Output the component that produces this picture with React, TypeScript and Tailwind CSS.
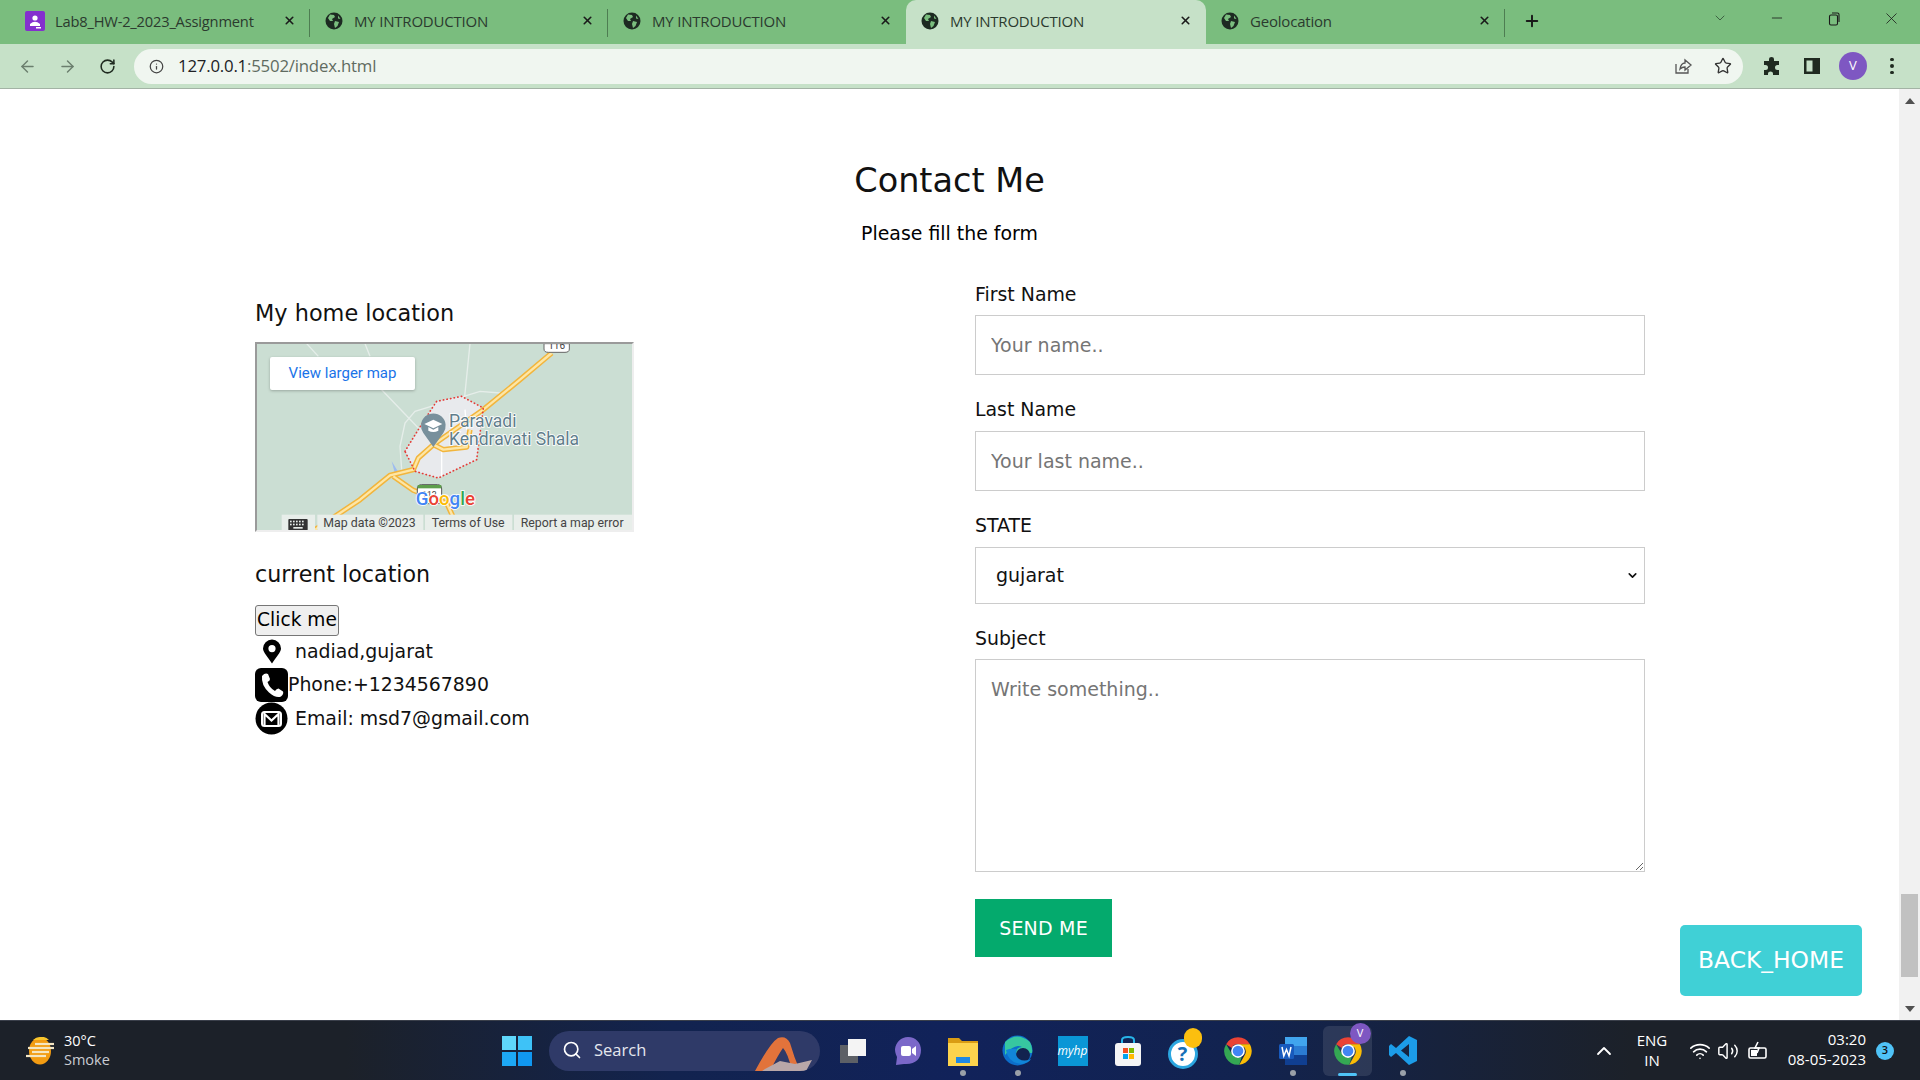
import React from "react";
import { ArrowLeft, ArrowRight, RotateCw, Info, Star, Plus, X, ChevronDown, ChevronUp, Minus, Search, Volume2, Wifi } from "lucide-react";

const dv = "font-['DejaVu_Sans',sans-serif]";
const ui = "font-['Open_Sans',sans-serif]";

function Globe() {
  return (
    <svg width="18" height="18" viewBox="0 0 18 18" className="shrink-0">
      <circle cx="9" cy="9" r="8.5" fill="#1d2a22" />
      <path d="M5 2.5 L9 3 L10 5 L7 7 L8 9 L5 9 L3 6 Z" fill="#7abd7e" />
      <path d="M10 9 L14 10 L12.5 14 L10 16 L9 12 Z" fill="#7abd7e" />
      <path d="M13 3.5 L15.5 7 L13 6.5 Z" fill="#7abd7e" />
    </svg>
  );
}

function ClassroomIcon() {
  return (
    <svg width="20" height="20" viewBox="0 0 20 20" className="shrink-0">
      <rect width="20" height="20" rx="2" fill="#8430ce" />
      <circle cx="10" cy="7" r="2.6" fill="#fff" />
      <path d="M5 13 Q10 8.5 15 13 V15 H5 Z" fill="#fff" />
      <rect x="11" y="16" width="5" height="1.5" fill="#fff" />
    </svg>
  );
}

function Tab({ title, active, width, icon, sep, textClass }: { title: string; active?: boolean; width: string; icon?: React.ReactNode; sep?: boolean; textClass?: string }) {
  return (
    <div className={`${width} relative flex h-[44px] shrink-0 items-center pb-[2px] pl-[15px] ${active ? "rounded-t-[10px] bg-[#c6e1c8]" : ""}`}>
      {icon ?? <Globe />}
      <span className={`${textClass ?? "ml-[11px] text-[15px]"} leading-none text-[#2b3a2e] ${ui} tracking-[-0.2px]`}>{title}</span>
      <X className="absolute right-[14px] top-[14px] text-[#1a1a1a]" size={13} strokeWidth={3} />
      {sep && <div className="absolute right-0 top-[9px] h-[28px] w-px bg-[#4e7d52]" />}
    </div>
  );
}

function TabStrip() {
  return (
    <div className="flex h-[44px] shrink-0 items-start bg-[#7abd7e] pl-[10px]">
      <Tab width="w-[300px]" title="Lab8_HW-2_2023_Assignment" textClass="ml-[10px] text-[14.7px]" icon={<ClassroomIcon />} sep />
      <Tab width="w-[298px]" title="MY INTRODUCTION" sep />
      <Tab width="w-[298px]" title="MY INTRODUCTION" />
      <Tab width="w-[300px]" title="MY INTRODUCTION" active />
      <Tab width="w-[299px]" title="Geolocation" sep />
      <Plus className="ml-[18px] mt-[12px] text-[#1a1a1a]" size={18} strokeWidth={2.6} />
      <ChevronDown className="ml-[171px] mt-[10px] text-[#2f4a33]" size={16} strokeWidth={1.2} />
      <Minus className="ml-[41px] mt-[10px] text-[#1a1a1a]" size={16} strokeWidth={1.2} />
      <svg className="ml-[41px] mt-[11px]" width="16" height="16" viewBox="0 0 16 16" fill="none" stroke="#1a1a1a" strokeWidth="1.1">
        <rect x="3.5" y="4" width="8" height="10" rx="1.5" />
        <path d="M6 2 H11.5 Q13 2 13 3.5 V11" />
      </svg>
      <X className="ml-[40px] mt-[9px] text-[#1a1a1a]" size={19} strokeWidth={1} />
    </div>
  );
}

function Toolbar() {
  return (
    <div className="flex h-[45px] shrink-0 items-center border-b border-[#a3b3a5] bg-[#c6e1c8]">
      <ArrowLeft className="ml-[18px] text-[#6b7f6e]" size={19} strokeWidth={1.8} />
      <ArrowRight className="ml-[21px] text-[#6b7f6e]" size={19} strokeWidth={1.8} />
      <RotateCw className="ml-[22px] text-[#1f2a20]" size={17} strokeWidth={2.2} />
      <div className="ml-[18px] flex h-[35px] w-[1609px] items-center rounded-full bg-[#f0f6f0] pl-[15px]">
        <Info className="text-[#444]" size={15} strokeWidth={2} />
        <span className={`ml-[14px] text-[16.8px] tracking-[-0.2px] text-[#202124] ${ui}`}>
          127.0.0.1<span className="text-[#5f6b60]">:5502/index.html</span>
        </span>
        <svg className="ml-auto" width="20" height="20" viewBox="0 0 20 20" fill="none" stroke="#555" strokeWidth="1.3">
          <path d="M3 8 V17 H15 V13" />
          <path d="M7 13 Q8 7 12 7 V4 L18 9 L12 14 V11 Q9 11 7 13 Z" />
        </svg>
        <Star className="ml-[21px] mr-[11px] text-[#333]" size={18} strokeWidth={1.8} />
      </div>
      <svg className="ml-[19px]" width="20" height="20" viewBox="0 0 20 20" fill="#1f2a20">
        <path d="M7 3 Q7 1 9.5 1 Q12 1 12 3 V5 H17 V9 H15.5 Q13 9 13 11.5 Q13 14 15.5 14 H17 V19 H11 V17.5 Q11 15.5 8.5 15.5 Q6 15.5 6 17.5 V19 H2 V14 H3.5 Q6 14 6 11.5 Q6 9 3.5 9 H2 V5 H7 Z" />
      </svg>
      <svg className="ml-[21px]" width="18" height="18" viewBox="0 0 18 18">
        <rect x="1" y="1" width="16" height="16" fill="#1f2a20" />
        <rect x="3.5" y="3.5" width="6" height="11" fill="#c6e1c8" />
      </svg>
      <div className="ml-[18px] flex h-[28px] w-[28px] items-center justify-center rounded-full bg-[#7e57c2] font-['Open_Sans',sans-serif] text-[13px] text-white">V</div>
      <div className="ml-[23px] flex flex-col gap-[3px]">
        <div className="h-[3.5px] w-[3.5px] rounded-full bg-[#1f2a20]" />
        <div className="h-[3.5px] w-[3.5px] rounded-full bg-[#1f2a20]" />
        <div className="h-[3.5px] w-[3.5px] rounded-full bg-[#1f2a20]" />
      </div>
    </div>
  );
}

function MapPicture() {
  const roadOuter = { fill: "none", stroke: "#f2b53c", strokeWidth: 16, strokeLinejoin: "round" as const };
  const roadInner = { fill: "none", stroke: "#fde6a6", strokeWidth: 7, strokeLinejoin: "round" as const };
  const main = "M215,607 L360,510 L450,437 L520,420 L535,385 L580,345 L730,240 L840,150 L935,70";
  const branch = "M580,345 L610,360 L680,352 L690,300";
  const south = "M460,440 L520,482 L620,520 L660,607";
  return (
    <div className="relative mt-[13px] h-[190px] w-[379px] border-2 border-b-[#eeeeee] border-l-[#9a9a9a] border-r-[#eeeeee] border-t-[#9a9a9a] bg-[#cbded3]">
      <svg className="block h-full w-full" viewBox="51 43 1125 558" preserveAspectRatio="none">
        <rect x="0" y="0" width="1300" height="700" fill="#cbded3" />
        <g fill="none" stroke="#e6eeea" strokeWidth="4">
          <path d="M200,42 L235,80" />
          <path d="M375,42 L390,80" />
          <path d="M425,180 L540,300" />
          <path d="M690,42 L670,240" />
          <path d="M485,420 L480,350 L495,280 L525,245 L720,185 L780,190" />
        </g>
        <path d="M495,365 L590,215 L665,200 L730,235 L710,390 L595,445 L525,425 Z" fill="#e8eaed" />
        <path d="M455,395 L480,435 L465,432 Z" fill="#9dbcf0" />
        <g fill="none" stroke="#fff" strokeWidth="4">
          <path d="M605,360 L605,440" />
          <path d="M675,240 L680,300" />
        </g>
        <path d={south} {...roadOuter} />
        <path d={main} {...roadOuter} />
        <path d={branch} {...roadOuter} />
        <path d={south} {...roadInner} />
        <path d={main} {...roadInner} />
        <path d={branch} {...roadInner} />
        <path d="M495,365 Q540,290 590,215 L665,200 L730,235 L710,390 L595,445 L525,425 Z" fill="none" stroke="#e53935" strokeWidth="5" strokeDasharray="1 10" strokeLinecap="round" />
        <path d="M580,352 L550,310 A37,37 0 1 1 610,310 Z" fill="#78909c" />
        <path d="M553,283 L580,270 L607,283 L580,296 Z M565,292 V303 Q580,311 595,303 V292 L580,300 Z" fill="#fff" />
        <g fontFamily="Roboto, sans-serif" fontSize="52.5" fill="#5f7d8c" stroke="#fff" strokeWidth="5" paintOrder="stroke">
          <text x="627" y="293">Paravadi</text>
          <text x="627" y="347">Kendravati Shala</text>
        </g>
        <path d="M912,42 H988 V58 Q988,68 975,68 H925 Q912,68 912,58 Z" fill="#fff" stroke="#666" strokeWidth="3" />
        <text x="950" y="58" fontFamily="Roboto, sans-serif" fontSize="30" textAnchor="middle" fill="#444">116</text>
        <path d="M532,478 Q532,465 545,465 H592 Q605,465 605,478 V510 Q605,522 592,522 H545 Q532,522 532,510 Z" fill="#fff" stroke="#555" strokeWidth="3" />
        <rect x="533" y="466" width="71" height="10" fill="#5e9e4b" />
        <text x="568" y="506" fontFamily="Roboto, sans-serif" fontSize="26" textAnchor="middle" fill="#444">112</text>
        <text x="527" y="526" fontFamily="Roboto, sans-serif" fontSize="56" fontWeight="500" stroke="#fff" strokeWidth="5" paintOrder="stroke">
          <tspan fill="#4285f4">G</tspan>
          <tspan fill="#ea4335">o</tspan>
          <tspan fill="#fbbc05">o</tspan>
          <tspan fill="#4285f4">g</tspan>
          <tspan fill="#34a853">l</tspan>
          <tspan fill="#ea4335">e</tspan>
        </text>
        <rect x="125" y="555" width="100" height="50" fill="#e8eeea" />
        <rect x="232" y="555" width="318" height="50" fill="#e8eeea" />
        <rect x="555" y="555" width="262" height="50" fill="#e8eeea" />
        <rect x="822" y="555" width="360" height="50" fill="#e8eeea" />
        <rect x="145" y="568" width="58" height="34" rx="3" fill="#333" />
        <g fill="#e8eeea">
          <rect x="150" y="573" width="5" height="5" />
          <rect x="159" y="573" width="5" height="5" />
          <rect x="168" y="573" width="5" height="5" />
          <rect x="177" y="573" width="5" height="5" />
          <rect x="186" y="573" width="5" height="5" />
          <rect x="150" y="582" width="5" height="5" />
          <rect x="159" y="582" width="5" height="5" />
          <rect x="168" y="582" width="5" height="5" />
          <rect x="177" y="582" width="5" height="5" />
          <rect x="186" y="582" width="5" height="5" />
          <rect x="160" y="592" width="28" height="5" />
        </g>
        <g fontFamily="Roboto, sans-serif" fontSize="37" fill="#444">
          <text x="250" y="593">Map data ©2023</text>
          <text x="575" y="593">Terms of Use</text>
          <text x="842" y="593">Report a map error</text>
        </g>
      </svg>
      <div className="absolute left-[13px] top-[13px] flex h-[33px] w-[145px] items-center justify-center rounded-[2px] bg-white font-['Roboto',sans-serif] text-[15px] text-[#1a73e8] shadow-[0_1px_3px_rgba(0,0,0,0.25)]">
        View larger map
      </div>
    </div>
  );
}

function LeftColumn() {
  return (
    <div className={`ml-[255px] flex w-[720px] shrink-0 flex-col items-start pt-[15px] ${dv}`}>
      <h3 className="text-[22.4px] leading-[32px] text-[#111]">My home location</h3>
      <MapPicture />
      <h3 className="mt-[26px] text-[22.2px] leading-[32px] text-[#111]">current location</h3>
      <button className="mt-[15px] h-[31px] w-[84px] rounded-[3px] border border-[#767676] bg-[#efefef] text-[18.6px] leading-none text-black">Click me</button>
      <div className="flex h-[31px] items-center text-[18.9px] text-[#111]">
        <div className="flex w-[33px] justify-center">
          <svg width="20" height="25" viewBox="0 0 20 25"><path d="M10 24.5 C6 18 1 13.5 1 9.5 A9 9 0 0 1 19 9.5 C19 13.5 14 18 10 24.5 Z M10 6 A3.6 3.6 0 1 0 10 13.2 A3.6 3.6 0 1 0 10 6 Z" fill="#000" fillRule="evenodd" /></svg>
        </div>
        <span className="ml-[7px]">nadiad,gujarat</span>
      </div>
      <div className="flex h-[35px] items-center text-[18.9px] text-[#111]">
        <svg width="33" height="34" viewBox="0 0 33 34">
          <rect width="33" height="34" rx="6" fill="#000" />
          <path d="M7 8 Q10 4.5 13 6 L15 11 Q15 13 12.5 14 Q14.5 20 20 23 Q21.5 20.5 23.5 20.5 L28 23.5 Q29 26 26 28.5 Q21 30.5 14 24.5 Q6 17 7 8 Z" fill="#fff" />
        </svg>
        <span>Phone:+1234567890</span>
      </div>
      <div className="flex h-[33px] items-center text-[18.9px] text-[#111]">
        <svg width="33" height="33" viewBox="0 0 33 33">
          <circle cx="16.5" cy="16.5" r="16" fill="#000" />
          <rect x="7" y="10" width="19" height="14" rx="2.5" fill="none" stroke="#fff" strokeWidth="2" />
          <path d="M9.5 23 V12 L16.5 18.5 L23.5 12 V23" fill="none" stroke="#fff" strokeWidth="2.2" />
        </svg>
        <span className="ml-[7px]">Email: msd7@gmail.com</span>
      </div>
    </div>
  );
}

function FormColumn() {
  const label = "block text-[18.9px] leading-[24px] text-[#111]";
  const field = "block w-full border border-[#cccccc] bg-white text-[19px] text-[#111] placeholder:text-[#757575] outline-none";
  return (
    <form className={`flex w-[670px] shrink-0 flex-col items-start ${dv}`}>
      <label className={label}>First Name</label>
      <input className={`${field} mt-[9px] h-[60px] px-[15px]`} placeholder="Your name.." />
      <label className={`${label} mt-[22px]`}>Last Name</label>
      <input className={`${field} mt-[10px] h-[60px] px-[15px]`} placeholder="Your last name.." />
      <label className={`${label} mt-[22px]`}>STATE</label>
      <div className="relative mt-[10px] w-full">
        <select className={`${field} h-[57px] appearance-none pl-[20px] pr-[24px]`} defaultValue="gujarat">
          <option value="gujarat">gujarat</option>
        </select>
        <ChevronDown className="pointer-events-none absolute right-[6px] top-[22px] text-[#111]" size={13} strokeWidth={3} />
      </div>
      <label className={`${label} mt-[22px]`}>Subject</label>
      <textarea className={`${field} mt-[9px] h-[213px] resize-y px-[15px] pt-[15px]`} placeholder="Write something.." />
      <button type="button" className="mt-[27px] h-[58px] w-[137px] bg-[#04aa6d] text-[19px] font-medium tracking-[0.2px] text-white">SEND ME</button>
    </form>
  );
}

function Scrollbar() {
  return (
    <aside className="flex w-[21px] shrink-0 flex-col items-center bg-[#f1f1f1]">
      <svg className="mt-[9px]" width="10" height="6" viewBox="0 0 10 6"><path d="M5 0 L10 6 H0 Z" fill="#505050" /></svg>
      <div className="mt-[790px] h-[83px] w-[17px] bg-[#c1c1c1]" />
      <svg className="mt-[29px]" width="10" height="6" viewBox="0 0 10 6"><path d="M0 0 H10 L5 6 Z" fill="#505050" /></svg>
    </aside>
  );
}

function Page() {
  return (
    <main className="relative flex min-h-0 flex-1">
      <div className="flex min-w-0 flex-1 flex-col bg-white pt-[68px]">
        <h1 className={`text-center text-[33.5px] leading-[48px] text-[#111] ${dv}`}>Contact Me</h1>
        <p className={`mt-[16px] text-center text-[18.9px] leading-[24px] text-black ${dv}`}>Please fill the form</p>
        <div className="mt-[37px] flex items-start">
          <LeftColumn />
          <FormColumn />
        </div>
      </div>
      <Scrollbar />
      <a className={`absolute bottom-[24px] right-[58px] flex h-[71px] w-[182px] items-center justify-center rounded-[5px] bg-[#40d0d6] text-[23.4px] text-white ${dv}`}>BACK_HOME</a>
    </main>
  );
}

function Slot({ children, dot }: { children: React.ReactNode; dot?: boolean }) {
  return (
    <div className="relative flex h-[60px] w-[55px] shrink-0 items-center justify-center">
      {children}
      {dot && <div className="absolute bottom-[5px] left-[25px] h-[6px] w-[6px] rounded-full bg-[#9aa0a8]" />}
    </div>
  );
}

function ChromeIcon({ size = 28 }: { size?: number }) {
  return (
    <svg width={size} height={size} viewBox="0 0 48 48">
      <path d="M24 2 A22 22 0 0 1 43 13 L24 13 A11 11 0 0 0 14 19 L5 13 A22 22 0 0 1 24 2 Z" fill="#ea4335" />
      <path d="M43 13 A22 22 0 0 1 26 46 L35 30 A11 11 0 0 0 34 18 L24 13 Z" fill="#fbbc05" />
      <path d="M26 46 A22 22 0 0 1 5 13 L15 30 A11 11 0 0 0 30 33 Z" fill="#34a853" />
      <circle cx="24" cy="24" r="11" fill="#fff" />
      <circle cx="24" cy="24" r="8.5" fill="#4285f4" />
    </svg>
  );
}

function Taskbar() {
  return (
    <footer className={`flex h-[60px] shrink-0 items-center border-t border-[#3a3f4a] bg-[linear-gradient(90deg,#1c2129_0%,#1c2129_18%,#12234f_35%,#11225a_50%,#12234f_65%,#1c2129_85%,#1c2129_100%)] ${ui}`}>
      <div className="flex w-[489px] shrink-0 items-center pl-[25px]">
        <svg width="30" height="28" viewBox="0 0 30 28">
          <ellipse cx="15" cy="14" rx="11" ry="13.5" fill="#f39c12" />
          <path d="M8 3 H24 A11 13 0 0 0 15 0 Q11 0 8 3 Z" fill="#f9c52c" />
          <g stroke="#f4e6c3" strokeWidth="2.2">
            <path d="M10 7 H29" /><path d="M3 11 H29" /><path d="M7 15 H24" /><path d="M1 19 H21" />
          </g>
        </svg>
        <div className="ml-[9px] flex flex-col pb-[2px] text-[14.5px] leading-[19px]">
          <span className="text-white">30°C</span>
          <span className="text-[#c9ccd2]">Smoke</span>
        </div>
      </div>
      <Slot>
        <svg width="30" height="30" viewBox="0 0 30 30">
          <rect width="14" height="14" fill="#5fd7fb" />
          <rect x="16" width="14" height="14" fill="#3ec2f7" />
          <rect y="16" width="14" height="14" fill="#1da8f5" />
          <rect x="16" y="16" width="14" height="14" fill="#1097f0" />
        </svg>
      </Slot>
      <div className="relative ml-[5px] flex h-[40px] w-[271px] shrink-0 items-center overflow-hidden rounded-full bg-[#2f3a68] pb-[1px] pl-[13px]">
        <Search className="text-white" size={20} strokeWidth={2} />
        <span className="ml-[12px] text-[16.5px] text-[#e5e7ee]">Search</span>
        <svg className="absolute bottom-0 right-0" width="70" height="36" viewBox="0 0 70 36">
          <path d="M5 36 Q20 8 28 3 Q36 0 40 8 Q44 22 50 36 H42 Q38 18 33 13 Q28 20 20 36 Z" fill="#e2733b" />
          <path d="M15 34 L30 26 L45 29 L62 25 L56 36 H12 Z" fill="#b9a7a8" />
        </svg>
      </div>
      <div className="ml-[5px] flex shrink-0 items-center">
        <Slot>
          <svg width="28" height="26" viewBox="0 0 28 26">
            <rect x="1" y="7" width="18" height="18" fill="#5d6066" />
            <rect x="9" y="1" width="18" height="17" fill="#f4f4f4" />
          </svg>
        </Slot>
        <Slot>
          <svg width="28" height="30" viewBox="0 0 28 30">
            <path d="M14 1 C22 1 27 7 27 14 C27 23 21 29 10 28 L2 29 L3 21 C1 17 1 14 1 13 C2 6 7 1 14 1 Z" fill="#7b68c9" />
            <rect x="7" y="10" width="10" height="10" rx="2" fill="#fff" />
            <path d="M18 13 L22 10 V20 L18 17 Z" fill="#fff" />
          </svg>
        </Slot>
        <Slot dot>
          <svg width="32" height="30" viewBox="0 0 32 30">
            <path d="M1 2 H12 L15 5 H31 V12 H1 Z" fill="#d99c14" />
            <rect x="1" y="7" width="30" height="23" fill="#fcd34d" />
            <rect x="9" y="21" width="14" height="6" fill="#1e88e5" />
          </svg>
        </Slot>
        <Slot dot>
          <svg width="31" height="31" viewBox="0 0 31 31">
            <circle cx="15.5" cy="15.5" r="15" fill="#0c6ecb" />
            <path d="M3 7 Q15 -4 28 7 Q31 13 30 18 L14 18 Q14 12 20 12 Q13 8 3 20 Z" fill="#37c7a0" />
            <circle cx="21" cy="20" r="7" fill="#12234f" />
            <path d="M4 15 Q6 28 20 29 Q27 28 29 24 Q22 27 17 24 Q12 20 15 14 Q9 13 4 15 Z" fill="#1186d9" />
          </svg>
        </Slot>
        <Slot>
          <div className="flex h-[30px] w-[30px] items-center justify-center bg-[#0a96d6] text-[12px] italic text-white">myhp</div>
        </Slot>
        <Slot>
          <svg width="28" height="30" viewBox="0 0 28 30">
            <path d="M8 8 V4 Q8 1 14 1 Q20 1 20 4 V8" fill="none" stroke="#27b4e8" strokeWidth="2" />
            <rect x="1" y="7" width="26" height="23" rx="3" fill="#f5f5f5" />
            <rect x="9" y="12" width="5" height="5" fill="#f25022" />
            <rect x="15" y="12" width="5" height="5" fill="#7fba00" />
            <rect x="9" y="18" width="5" height="5" fill="#00a4ef" />
            <rect x="15" y="18" width="5" height="5" fill="#ffb900" />
          </svg>
        </Slot>
        <Slot>
          <div className="relative ml-[4px] h-[36px] w-[34px]">
            <div className="absolute bottom-0 left-0 flex h-[30px] w-[30px] items-center justify-center rounded-full border-[3px] border-[#2ba6e0] bg-white text-[20px] font-bold leading-none text-[#1670b8]">?</div>
            <div className="absolute right-0 top-[-5px] h-[20px] w-[18px] rounded-full bg-[#fbbf0f]" />
          </div>
        </Slot>
        <Slot><ChromeIcon size={30} /></Slot>
        <Slot dot>
          <svg width="30" height="30" viewBox="0 0 30 30">
            <rect x="7" y="1" width="22" height="28" rx="2" fill="#2b7cd3" />
            <rect x="7" y="1" width="22" height="9" fill="#41a5ee" />
            <rect x="7" y="19" width="22" height="10" fill="#103f91" />
            <rect x="1" y="8" width="15" height="15" rx="1.5" fill="#185abd" />
            <path d="M4 11 L5.8 20 L8.5 13.5 L11 20 L13 11" fill="none" stroke="#fff" strokeWidth="1.5" />
          </svg>
        </Slot>
        <div className="relative flex h-[60px] w-[55px] shrink-0 items-center justify-center">
          <div className="absolute left-[3px] top-[5px] h-[50px] w-[49px] rounded-[6px] bg-white/10" />
          <div className="relative">
            <ChromeIcon size={30} />
            <div className="absolute right-[-8px] top-[-13px] flex h-[21px] w-[21px] items-center justify-center rounded-full bg-[#7e57c2] text-[11px] text-white">V</div>
          </div>
          <div className="absolute bottom-[5px] left-[18px] h-[3px] w-[19px] rounded-full bg-[#4fc3f7]" />
        </div>
        <Slot dot>
          <svg width="30" height="31" viewBox="0 0 30 31">
            <path d="M21 1 L29 5 V26 L21 30 L8 18 L3 22 L1 20 V11 L3 9 L8 13 Z M21 9 L13 15.5 L21 22 Z" fill="#1c9ce8" fillRule="evenodd" />
          </svg>
        </Slot>
      </div>
      <div className="ml-auto flex shrink-0 items-center pr-[26px] text-white">
        <ChevronUp size={24} strokeWidth={1.8} />
        <div className="ml-[12px] flex w-[48px] flex-col items-center pb-[2px] text-[15px] leading-[20px]">
          <span>ENG</span>
          <span>IN</span>
        </div>
        <Wifi className="ml-[13px]" size={22} strokeWidth={1.8} />
        <Volume2 className="ml-[6px]" size={22} strokeWidth={1.6} />
        <svg className="ml-[8px]" width="22" height="22" viewBox="0 0 22 22" fill="none" stroke="#fff" strokeWidth="1.6">
          <rect x="2" y="8" width="17" height="10" rx="1.5" />
          <path d="M11 2 L8 8 H12 L10 13" />
          <rect x="4" y="10" width="6" height="6" fill="#fff" stroke="none" />
        </svg>
        <div className="ml-[5px] flex w-[92px] flex-col items-end pb-[3px] text-[15px] leading-[20px]">
          <span>03:20</span>
          <span>08-05-2023</span>
        </div>
        <div className="ml-[10px] flex h-[18px] w-[18px] items-center justify-center rounded-full bg-[#4fc3f7] text-[11px] font-semibold text-[#111]">3</div>
      </div>
    </footer>
  );
}

export default function App() {
  return (
    <div className="flex h-[1080px] w-[1920px] flex-col overflow-hidden bg-white">
      <TabStrip />
      <Toolbar />
      <Page />
      <Taskbar />
    </div>
  );
}
